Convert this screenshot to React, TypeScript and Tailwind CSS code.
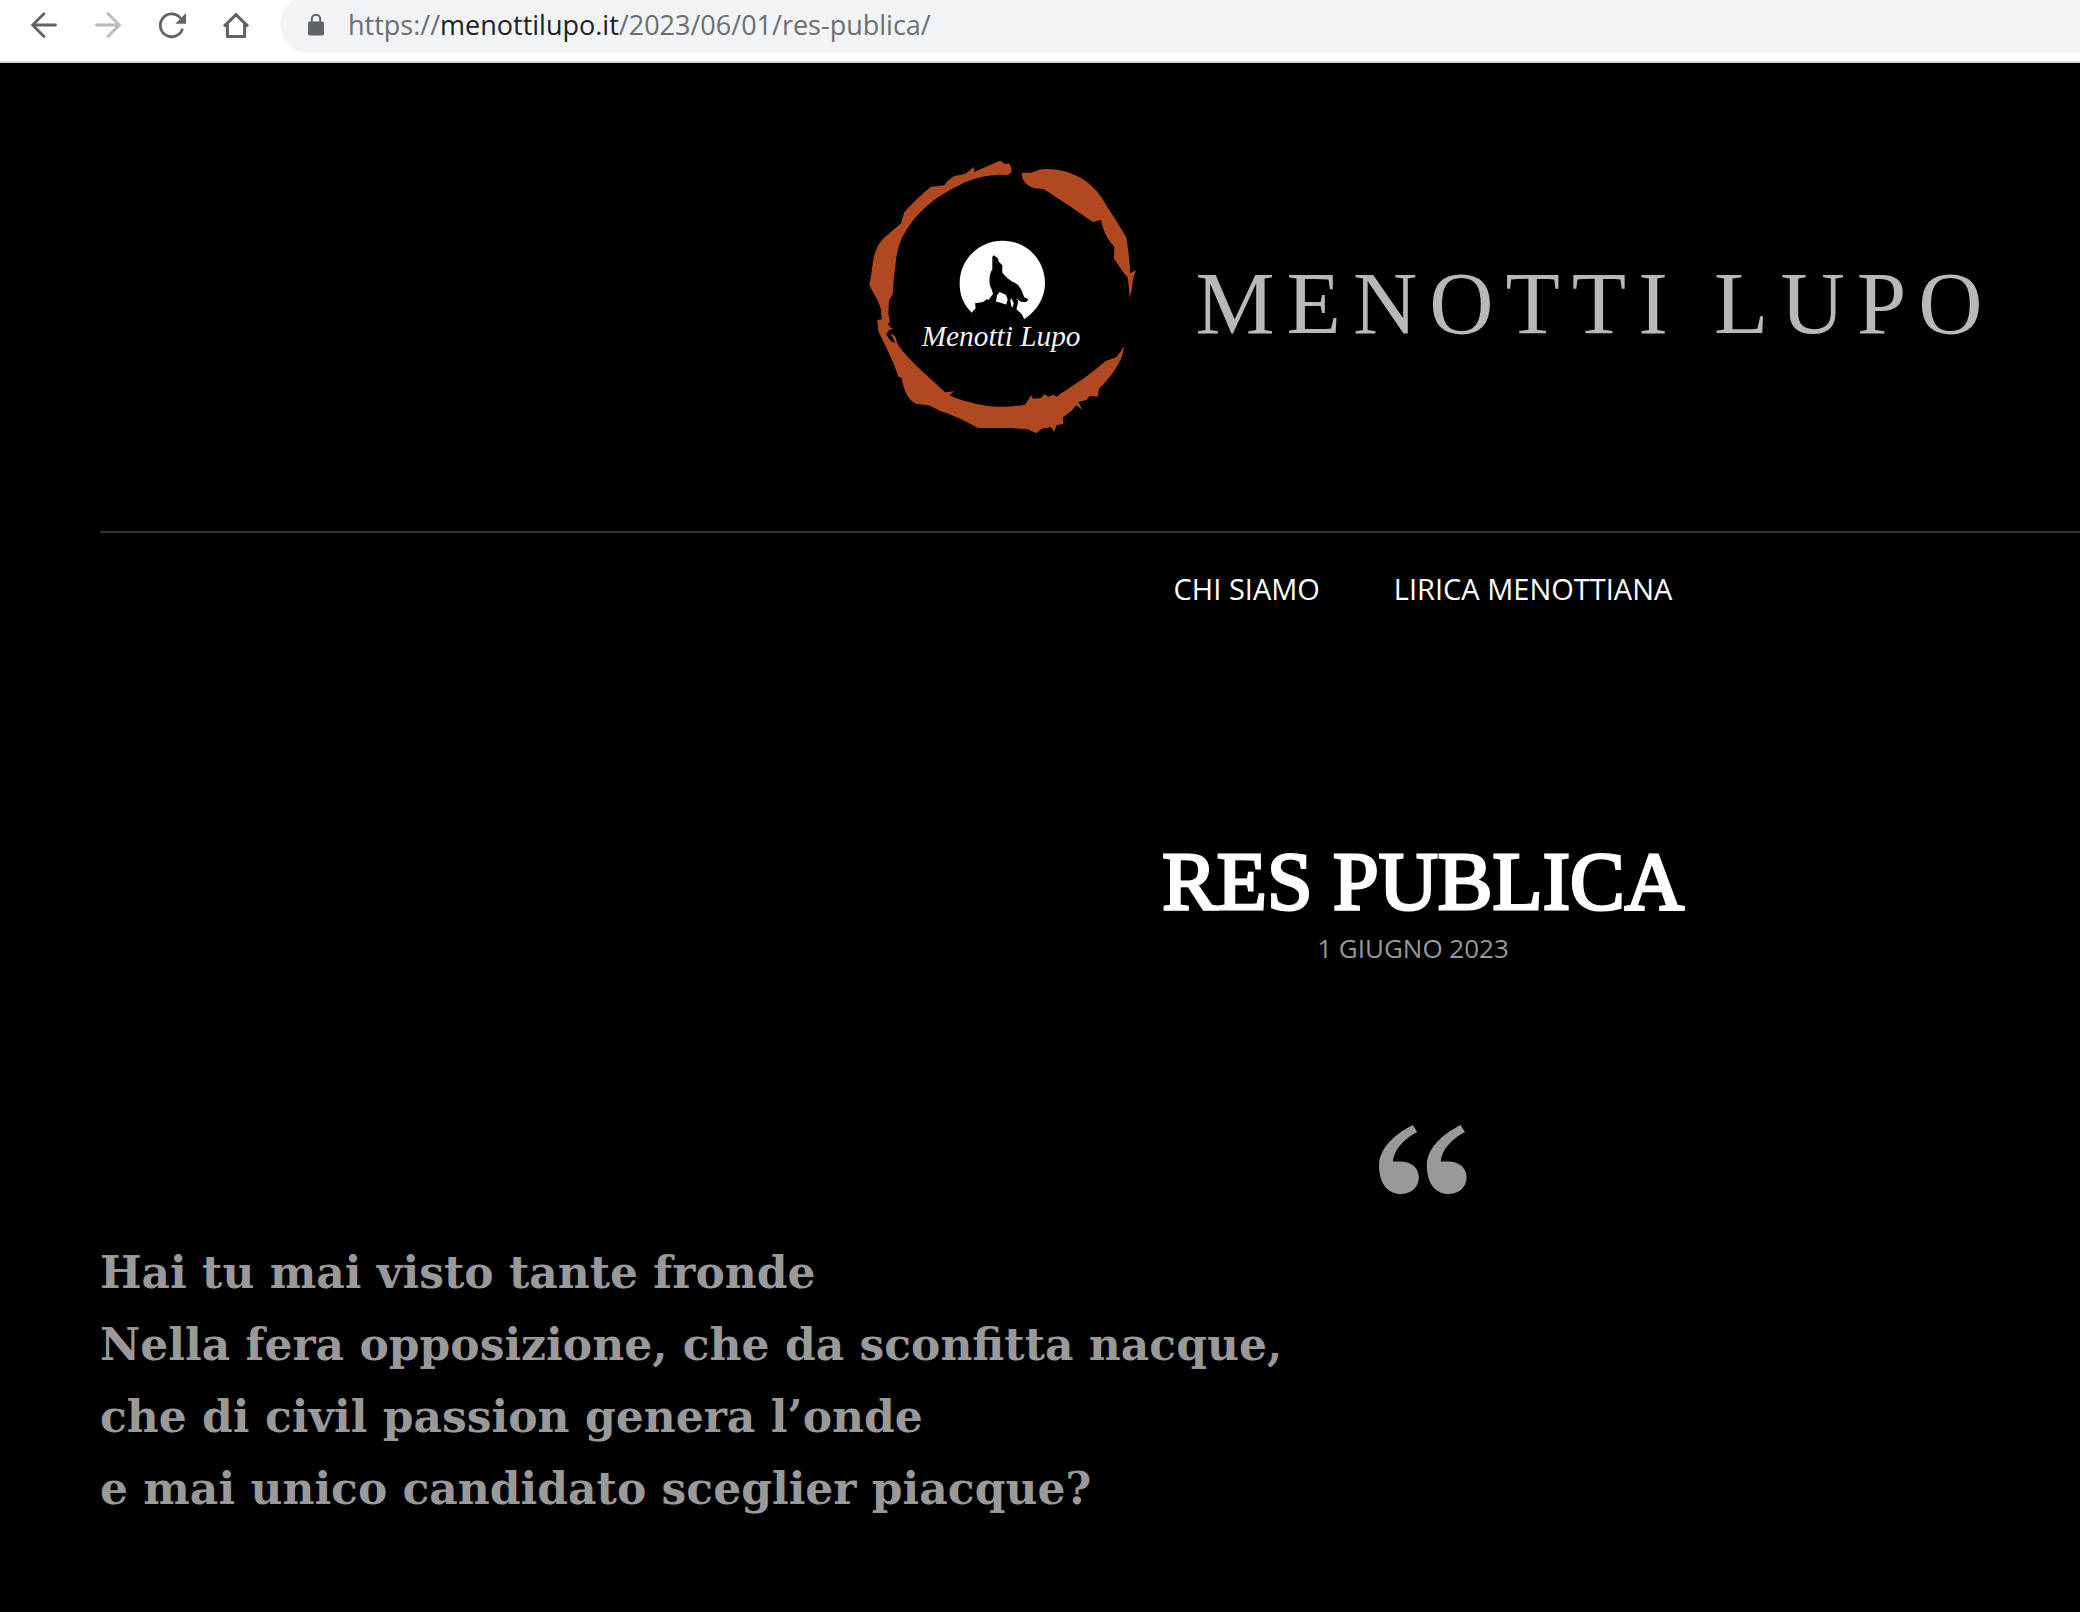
import React from 'react';

const navLinks = [
  { label: 'CHI SIAMO', href: '#chi-siamo' },
  { label: 'LIRICA MENOTTIANA', href: '#lirica-menottiana' },
];

const verses = [
  'Hai tu mai visto tante fronde',
  'Nella fera opposizione, che da sconfitta nacque,',
  'che di civil passion genera l’onde',
  'e mai unico candidato sceglier piacque?',
];

const BackIcon = () => (
  <svg viewBox="0 0 32 32" className="h-8 w-8" fill="none" stroke="currentColor" strokeWidth="2.8" strokeLinecap="round">
    <path d="M27.5 16H5M16 4.8L4.6 16L16 27.4" />
  </svg>
);

const ForwardIcon = () => (
  <svg viewBox="0 0 32 32" className="h-8 w-8" fill="none" stroke="currentColor" strokeWidth="2.8" strokeLinecap="round">
    <path d="M4.5 16H27M16 4.8L27.4 16L16 27.4" />
  </svg>
);

const ReloadIcon = () => (
  <svg viewBox="0 0 32 32" className="h-8 w-8" fill="none" stroke="currentColor" strokeWidth="2.8" strokeLinecap="round">
    <path d="M26.2 20.8A11.4 11.4 0 1 1 23.9 8.4" />
    <path d="M30 4V14.7H19.3Z" fill="currentColor" stroke="none" />
  </svg>
);

const HomeIcon = () => (
  <svg viewBox="0 0 32 32" className="h-8 w-8" fill="none" stroke="currentColor" strokeWidth="3">
    <path d="M4 17.4L16 5.6L28 17.4" />
    <path d="M7.4 15V27.4H24.6V15" strokeLinejoin="round" />
  </svg>
);

const LockIcon = () => (
  <svg viewBox="0 0 16 22" className="h-[22px] w-4 shrink-0 text-[#5f6368]" aria-hidden="true">
    <rect x="0" y="7.4" width="16" height="14" rx="2" fill="currentColor" />
    <path d="M3.8 8V5A4.2 4.2 0 0 1 12.2 5V8" fill="none" stroke="currentColor" strokeWidth="2" />
  </svg>
);

const QuoteIcon = () => (
  <svg viewBox="114 74 265 208" className="h-[69px] w-[88px] text-[#999999]" fill="currentColor" aria-hidden="true">
    <path d="M216 74L229 95C188 116 158 150 156 184H178C214 184 234 205 234 232C234 261 210 282 180 282C140 282 114 250 114 196C114 150 152 106 216 74Z" />
    <path d="M360 74L373 95C332 116 302 150 300 184H322C358 184 378 205 378 232C378 261 354 282 324 282C284 282 258 250 258 196C258 150 296 106 360 74Z" />
  </svg>
);

const Logo = () => (
  <svg viewBox="0 0 900 930" className="h-[310px] w-[300px]" role="img" aria-label="Menotti Lupo">
    <g fill="#b04820">
      <path d="M448 62L462 72L474 70L482 84L481 98L470 105L444 104C410 106 380 112 350 124C310 142 270 164 240 188C205 216 180 246 164 274C148 300 138 330 135 362L129 410L125 462L114 482L112 520L117 546L110 552L118 562L126 566L112 572L106 584L120 604L133 608L118 580L132 588L140 612C158 640 186 668 214 694L262 738L282 757L310 754L296 766C330 782 370 792 410 798C450 802 490 800 522 794L540 766L546 776L570 774L580 762L592 770L608 764L616 770C660 740 720 704 762 664L796 652L821 618L812 652C800 680 776 716 744 746L740 770L716 768L706 780L682 786L694 810L676 796L662 812L636 832L636 852L616 856L610 876L600 862L572 866L556 880L530 868L480 864L380 864C350 846 312 828 270 814L232 796L196 792C170 780 158 750 152 714L142 710C130 670 104 620 82 574L79 540L92 538L90 510C84 480 66 460 55 434L62 396C66 350 74 320 96 296L150 250L160 216C184 190 214 160 240 140L280 136C290 120 310 104 326 106L346 100L368 80L370 96C396 84 422 72 448 62Z" />
      <path d="M512 98L540 98L570 88C610 84 654 94 690 114C720 132 746 158 762 190L792 236L826 292C832 330 836 364 838 400L855 390L846 416L842 452L836 474L834 446L830 412C816 398 804 378 789 356L790 320C774 304 758 282 750 240L726 246C690 222 630 180 578 148L548 144C530 138 512 124 512 98Z" />
    </g>
    <path
      d="M362 518C336 492 326 464 326 430C326 358 384 302 454 302C526 302 582 358 582 430C582 474 558 512 520 538L512 522L494 506C470 494 446 486 424 484L408 478L396 486L372 490L374 504Z"
      fill="#ffffff"
    />
    {/* the wolf stands on the rock, white gaps between the legs */}
    <path
      d="M428 346L440 354L444 366L454 376L454 398C464 412 480 424 494 430C510 440 514 458 520 472L532 478L526 486L512 486C504 482 498 476 494 470L502 484L496 510L484 508L488 488L480 474L478 480L482 504L464 500L470 478L464 464L446 456L438 466L434 490L410 484L426 462L422 448C412 432 414 402 424 388L424 350Z"
      fill="#000000"
    />
    <text x="212" y="618" fill="#f2f2f2" fontSize="88" fontStyle="italic" fontFamily="'Liberation Serif', serif">
      Menotti Lupo
    </text>
  </svg>
);

const BrowserBar = () => (
  <div className="border-b-2 border-[#d3d6d9] bg-white pb-2">
    <div className="-mt-1 flex h-[57px] items-center pl-7 text-[#5f6368]">
      <div className="flex gap-8">
        <button type="button" aria-label="Indietro"><BackIcon /></button>
        <button type="button" aria-label="Avanti" className="text-[#bababc]" disabled><ForwardIcon /></button>
        <button type="button" aria-label="Ricarica"><ReloadIcon /></button>
        <button type="button" aria-label="Home"><HomeIcon /></button>
      </div>
      <div className="ml-7 flex h-full flex-1 items-center gap-6 rounded-l-full bg-[#f1f3f4] pl-7">
        <LockIcon />
        <div
          role="textbox"
          aria-label="Barra degli indirizzi"
          contentEditable
          suppressContentEditableWarning
          spellCheck={false}
          className="font-['Open_Sans',sans-serif] text-[27px] leading-9 whitespace-nowrap text-[#6b6e72] outline-none"
        >
          https://<span className="text-[#202124]">menottilupo.it</span>/2023/06/01/res-publica/
        </div>
      </div>
    </div>
  </div>
);

const SiteHeader = () => (
  <header>
    <div className="flex items-center justify-center gap-11 border-b-2 border-[#333333] pt-[77px] pb-[81px]">
      <Logo />
      <a href="#home" className="pt-4 font-['Liberation_Serif',serif] text-[89px] leading-none tracking-[12px] text-[#b8b8b8]">
        MENOTTI LUPO
      </a>
    </div>
    <nav className="flex justify-center gap-[74px] pt-9">
      {navLinks.map((link) => (
        <a key={link.href} href={link.href} className="font-['Open_Sans',sans-serif] text-[29px] leading-10 text-white">
          {link.label}
        </a>
      ))}
    </nav>
  </header>
);

const App: React.FC = () => {
  return (
    <div className="min-h-screen overflow-hidden bg-black">
      <BrowserBar />
      {/* wide desktop layout, the right side runs past the window */}
      <div className="min-w-[2846px] px-[100px]">
        <SiteHeader />
        <main>
          <article>
            <div className="flex flex-col items-center pt-[225px]">
              <h1 className="font-['Liberation_Serif',serif] text-[82px] leading-[96px] text-white [-webkit-text-stroke:3px_#ffffff]">
                RES PUBLICA
              </h1>
              <time dateTime="2023-06-01" className="pr-5 font-['Open_Sans',sans-serif] text-[26px] leading-9 text-[#999999]">
                1 GIUGNO 2023
              </time>
            </div>
            <div className="flex justify-center pt-[159px]">
              <QuoteIcon />
            </div>
            <blockquote className="pt-[43px] font-['DejaVu_Serif',serif] text-[44px] leading-[72px] font-bold text-[#999999]">
              {verses.map((verse) => (
                <p key={verse}>{verse}</p>
              ))}
            </blockquote>
          </article>
        </main>
      </div>
    </div>
  );
};

export default App;
